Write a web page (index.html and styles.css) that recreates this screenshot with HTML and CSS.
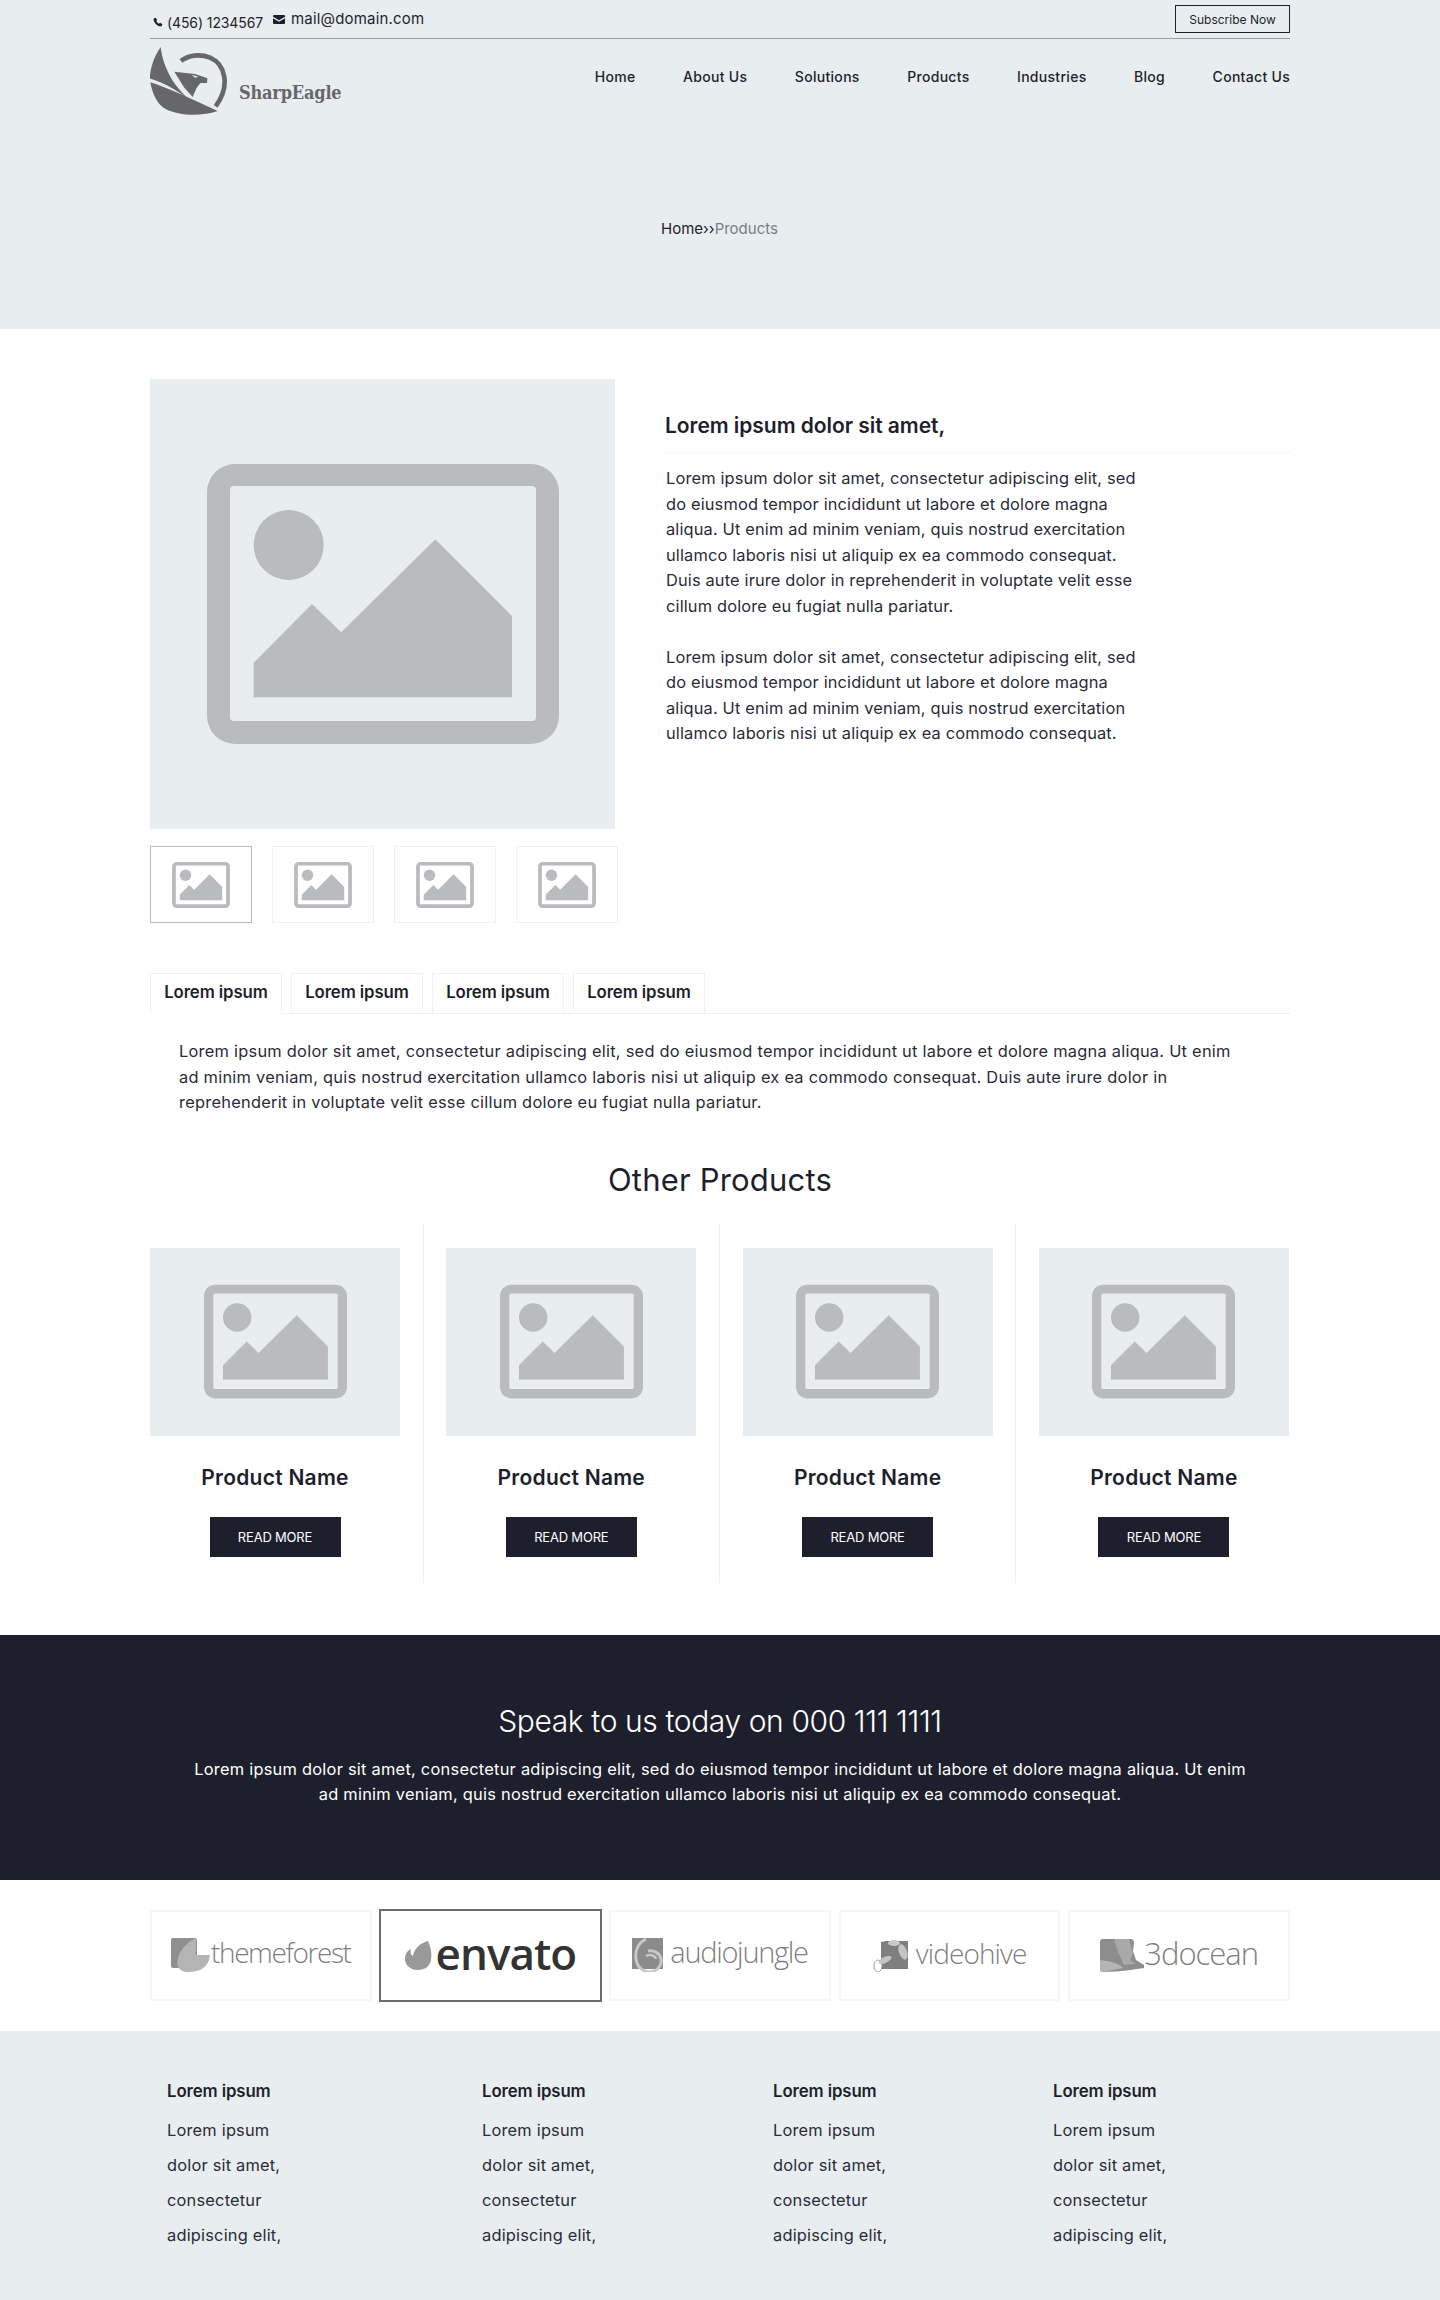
FILE: index.html
```html
<!DOCTYPE html>
<html lang="en">
<head>
<meta charset="utf-8">
<title>Products - SharpEagle</title>
<link rel="stylesheet" href="styles.css">
</head>
<body>
<svg class="defs" width="0" height="0" aria-hidden="true">
  <symbol id="ph" viewBox="0 0 352 280">
    <path fill-rule="evenodd" d="M28 0H324A28 28 0 0 1 352 28V252A28 28 0 0 1 324 280H28A28 28 0 0 1 0 252V28A28 28 0 0 1 28 0ZM27 22A4 4 0 0 0 23 26V253A4 4 0 0 0 27 257H325A4 4 0 0 0 329 253V26A4 4 0 0 0 325 22Z"/>
    <circle cx="81.7" cy="81" r="35"/>
    <path d="M46.7 198.7 105 140 134.3 168.3 228.3 75.3 305 152V233.3H46.7Z"/>
  </symbol>
</svg>

<header class="hero">
  <div class="wrap">
    <div class="topbar">
      <div class="contact">
        <span class="phone">
          <svg class="ic-phone" viewBox="0 0 24 24"><path d="M6.500 1.500 10 7 7.800 9.600c1 2.600 3.600 5.400 6.600 6.600L17 14l5.500 3.500-1.800 4.200c-.4.800-1.300 1.100-2.200 1C9.500 21.500 2.500 14.500 1.300 6c-.1-.9.200-1.800 1-2.200Z"/></svg>
          (456) 1234567
        </span>
        <span class="mail">
          <svg class="ic-mail" viewBox="0 0 24 18"><path d="M2 0H22A2 2 0 0 1 24 2V3.500L12 10.500 0 3.500V2A2 2 0 0 1 2 0ZM0 6.500 12 13.500 24 6.500V16A2 2 0 0 1 22 18H2A2 2 0 0 1 0 16Z"/></svg>
          mail@domain.com
        </span>
      </div>
      <a class="subscribe">Subscribe Now</a>
    </div>
    <div class="navrow">
      <div class="logo">
        <svg class="eagle" viewBox="15 114 237 204">
          <path d="M47 114C22 150 16 185 14 208 60 222 108 250 152 286 100 250 56 190 47 114Z"/>
          <path d="M16 220C62 234 135 268 218 306 170 322 105 322 62 300 36 286 22 254 16 220Z"/>
          <path d="M88 188 150 195 187 208 186 222 166 222 155 236 143 264 118 236Z"/>
          <path class="eagle-eye" d="M140 197 160 203 150 206Z"/>
          <path class="eagle-ring" d="M108 156C130 138 165 134 195 146 240 165 258 230 212 292"/>
        </svg>
        <span class="brand">SharpEagle</span>
      </div>
      <nav class="nav">
        <a>Home</a><a>About Us</a><a>Solutions</a><a>Products</a><a>Industries</a><a>Blog</a><a>Contact Us</a>
      </nav>
    </div>
    <div class="crumb"><span>Home</span><span>››</span><span class="crumb-cur">Products</span></div>
  </div>
</header>

<main class="wrap">
  <section class="detail">
    <div class="gallery">
      <div class="shot"><svg class="ph-lg"><use href="#ph"/></svg></div>
      <div class="thumbs">
        <div class="thumb thumb-on"><svg class="ph-sm"><use href="#ph"/></svg></div>
        <div class="thumb"><svg class="ph-sm"><use href="#ph"/></svg></div>
        <div class="thumb"><svg class="ph-sm"><use href="#ph"/></svg></div>
        <div class="thumb"><svg class="ph-sm"><use href="#ph"/></svg></div>
      </div>
    </div>
    <div class="info">
      <h2 class="info-title">Lorem ipsum dolor sit amet,</h2>
      <p class="copy">Lorem ipsum dolor sit amet, consectetur adipiscing elit, sed<br>do eiusmod tempor incididunt ut labore et dolore magna<br>aliqua. Ut enim ad minim veniam, quis nostrud exercitation<br>ullamco laboris nisi ut aliquip ex ea commodo consequat.<br>Duis aute irure dolor in reprehenderit in voluptate velit esse<br>cillum dolore eu fugiat nulla pariatur.</p>
      <p class="copy">Lorem ipsum dolor sit amet, consectetur adipiscing elit, sed<br>do eiusmod tempor incididunt ut labore et dolore magna<br>aliqua. Ut enim ad minim veniam, quis nostrud exercitation<br>ullamco laboris nisi ut aliquip ex ea commodo consequat.</p>
    </div>
  </section>

  <section class="tabs-block">
    <div class="tabs">
      <a class="tab tab-on">Lorem ipsum</a><a class="tab">Lorem ipsum</a><a class="tab">Lorem ipsum</a><a class="tab">Lorem ipsum</a>
    </div>
    <p class="tab-copy">Lorem ipsum dolor sit amet, consectetur adipiscing elit, sed do eiusmod tempor incididunt ut labore et dolore magna aliqua. Ut enim<br>ad minim veniam, quis nostrud exercitation ullamco laboris nisi ut aliquip ex ea commodo consequat. Duis aute irure dolor in<br>reprehenderit in voluptate velit esse cillum dolore eu fugiat nulla pariatur.</p>
  </section>

  <h2 class="section-title">Other Products</h2>
  <section class="products">
    <article class="product">
      <div class="product-img"><svg class="ph-md"><use href="#ph"/></svg></div>
      <h3 class="product-name">Product Name</h3>
      <a class="btn">READ MORE</a>
    </article>
    <article class="product">
      <div class="product-img"><svg class="ph-md"><use href="#ph"/></svg></div>
      <h3 class="product-name">Product Name</h3>
      <a class="btn">READ MORE</a>
    </article>
    <article class="product">
      <div class="product-img"><svg class="ph-md"><use href="#ph"/></svg></div>
      <h3 class="product-name">Product Name</h3>
      <a class="btn">READ MORE</a>
    </article>
    <article class="product">
      <div class="product-img"><svg class="ph-md"><use href="#ph"/></svg></div>
      <h3 class="product-name">Product Name</h3>
      <a class="btn">READ MORE</a>
    </article>
  </section>
</main>

<section class="cta">
  <h2 class="cta-title">Speak to us today on 000 111 1111</h2>
  <p class="cta-copy">Lorem ipsum dolor sit amet, consectetur adipiscing elit, sed do eiusmod tempor incididunt ut labore et dolore magna aliqua. Ut enim<br>ad minim veniam, quis nostrud exercitation ullamco laboris nisi ut aliquip ex ea commodo consequat.</p>
</section>

<section class="wrap brands">
  <div class="tile">
    <svg class="bi bi-tf" viewBox="0 0 40 34">
      <rect x="0" y="0" width="26" height="30" rx="2" fill="#8f8f8f"/>
      <path d="M25 0C16 4 9 12 7 20 5 28 8 33 15 34 24 34 34 33 38 22L39 17 26 17C24 16 24 15 25 12Z" fill="#b4b4b4"/>
    </svg>
    <span class="bt bt-tf">themeforest</span>
  </div>
  <div class="tile tile-on">
    <svg class="bi bi-en" viewBox="0 0 27 29"><path d="M23 0C26 7 27 12 26 19 25 25 20 29 13 29 5 29 0 24 0 18 0 13 3 9 6 8 5 12 6 14 8 15 9 8 15 2 23 0Z" fill="#999"/></svg>
    <span class="bt bt-en">envato</span>
  </div>
  <div class="tile">
    <svg class="bi bi-aj" viewBox="0 0 31 34">
      <rect x="0" y="0" width="31" height="31" fill="#8b8b8b"/>
      <path d="M14 1C6 5 3 13 4 21 5 29 11 34 18 34 26 33 30 27 29 21 28 15 22 12 16 13" fill="none" stroke="#c8c8c8" stroke-width="3"/>
      <path d="M24 21C23 17 18 16 14 18" fill="none" stroke="#c8c8c8" stroke-width="2.500"/>
    </svg>
    <span class="bt bt-aj">audiojungle</span>
  </div>
  <div class="tile">
    <svg class="bi bi-vh" viewBox="0 0 36 34">
      <path d="M8 4 13 3H35V31H8Z" fill="#7f7f7f"/>
      <ellipse cx="30" cy="14" rx="4" ry="8" fill="#c4c4c4" transform="rotate(-20 30 14)"/>
      <ellipse cx="21" cy="5" rx="6" ry="3" fill="#c9c9c9"/>
      <ellipse cx="5" cy="28" rx="4" ry="6" fill="#fff" stroke="#9a9a9a"/>
      <ellipse cx="12" cy="22" rx="7" ry="3" fill="#c4c4c4" transform="rotate(-25 12 22)"/>
    </svg>
    <span class="bt bt-vh">videohive</span>
  </div>
  <div class="tile">
    <svg class="bi bi-3d" viewBox="0 0 44 33">
      <path d="M3 0H31C33 0 34 2 34 4L33 12 36 21 44 26V29C36 30 20 33 3 33A3 3 0 0 1 0 30V3A3 3 0 0 1 3 0Z" fill="#8d8d8d"/>
      <path d="M14 0H29L33 14 30 21 36 25 24 26C20 17 16 9 14 0Z" fill="#a9a9a9"/>
      <path d="M0 21C10 22 18 24 23 29L3 33 0 31Z" fill="#b5b5b5"/>
    </svg>
    <span class="bt bt-3d">3docean</span>
  </div>
</section>

<footer class="footer">
  <div class="wrap footer-grid">
    <div class="fcol"><h4 class="fhead">Lorem ipsum</h4><ul class="flist"><li>Lorem ipsum</li><li>dolor sit amet,</li><li>consectetur</li><li>adipiscing elit,</li></ul></div>
    <div class="fcol"><h4 class="fhead">Lorem ipsum</h4><ul class="flist"><li>Lorem ipsum</li><li>dolor sit amet,</li><li>consectetur</li><li>adipiscing elit,</li></ul></div>
    <div class="fcol"><h4 class="fhead">Lorem ipsum</h4><ul class="flist"><li>Lorem ipsum</li><li>dolor sit amet,</li><li>consectetur</li><li>adipiscing elit,</li></ul></div>
    <div class="fcol"><h4 class="fhead">Lorem ipsum</h4><ul class="flist"><li>Lorem ipsum</li><li>dolor sit amet,</li><li>consectetur</li><li>adipiscing elit,</li></ul></div>
  </div>
</footer>
</body>
</html>
```
FILE: styles.css
```css
* { box-sizing: border-box; }
html, body { margin: 0; padding: 0; }
body {
  font-family: "Inter", "Liberation Sans", sans-serif;
  font-size: 16px;
  color: #1e1f2c;
  background: #fff;
  width: 1440px;
}
h2, h3, h4, p, ul { margin: 0; padding: 0; }
ul { list-style: none; }
.defs { display: block; height: 0; }
.wrap { width: 1140px; margin: 0 auto; }

.hero { background: #e8edf0; height: 329px; }
.topbar {
  height: 39px;
  border-bottom: 1px solid #999b9e;
  display: flex;
  justify-content: space-between;
  align-items: flex-start;
}
.contact { display: flex; padding-left: 3px; font-size: 14px; }
.phone { display: flex; align-items: center; height: 20px; margin-top: 12px; gap: 4px; width: 120px; letter-spacing: -.1px; }
.mail { display: flex; align-items: center; height: 20px; margin-top: 8px; gap: 6px; font-size: 15px; letter-spacing: .18px; }
.ic-phone { width: 10px; height: 10px; fill: #1e1f2c; flex: none; }
.ic-mail { width: 12px; height: 9px; fill: #1e1f2c; flex: none; margin-top: 3px; }
.subscribe {
  margin-top: 5px;
  width: 115px;
  height: 28px;
  border: 1px solid #1e1f2c;
  font-size: 12px;
  display: flex;
  align-items: center;
  justify-content: center;
}
.navrow { display: flex; justify-content: space-between; align-items: flex-start; padding-top: 8px; }
.logo { display: flex; align-items: flex-start; gap: 10px; }
.eagle { width: 79px; height: 68px; fill: #67676b; display: block; }
.eagle-eye { fill: #e8edf0; }
.eagle-ring { fill: none; stroke: #67676b; stroke-width: 14; }
.brand {
  font-family: "DejaVu Serif Condensed", "DejaVu Serif", "Liberation Serif", serif;
  font-weight: 700;
  font-size: 18px;
  color: #67676b;
  margin-top: 34px;
  line-height: 24px;
  letter-spacing: -.2px;
}
.nav { display: flex; gap: 47.500px; font-size: 14px; font-weight: 500; line-height: 20px; padding-top: 20px; letter-spacing: .3px; }
.crumb { display: flex; justify-content: center; font-size: 15px; line-height: 20px; margin-top: 104px; padding-right: 1px; }
.crumb-cur { color: #7b7d84; }

.detail { display: flex; gap: 47px; padding-top: 50px; }
.gallery { width: 468px; }
.shot { width: 465px; height: 450px; background: #e8edf0; display: flex; align-items: center; justify-content: center; }
.ph-lg { width: 352px; height: 280px; fill: #b9bbbe; }
.thumbs { display: flex; gap: 20.300px; margin-top: 17px; }
.thumb { width: 102px; height: 77px; border: 1px solid #f0f0f0; display: flex; align-items: center; justify-content: center; }
.thumb-on { border-color: #b9bbbe; }
.ph-sm { width: 58px; height: 46px; fill: #b9bbbe; }
.info { flex: 1; padding-top: 32px; }
.info-title { font-size: 21px; font-weight: 600; line-height: 30px; padding-bottom: 11px; border-bottom: 1px solid #f2f3f4; margin-bottom: 13px; letter-spacing: -.05px; }
.copy { font-size: 16.400px; line-height: 25.500px; padding-left: 1px; margin-bottom: 25.500px; color: #2a2b38; letter-spacing: .15px; }

.tabs-block { padding-top: 50px; }
.tabs { display: flex; gap: 9px; border-bottom: 1px solid #eff0f1; height: 41px; }
.tab { width: 132px; height: 41px; border: 1px solid #f0f0f0; font-size: 16.800px; font-weight: 600; display: flex; align-items: center; justify-content: center; letter-spacing: -.1px; padding-bottom: 3px; }
.tab-on { border-bottom-color: #fff; }
.tab-copy { padding: 25px 0 0 29px; font-size: 16.400px; line-height: 25.500px; color: #2a2b38; letter-spacing: .25px; }

.section-title { font-size: 31px; font-weight: 400; line-height: 45px; text-align: center; margin-top: 41px; letter-spacing: .2px; }
.products { display: grid; grid-template-columns: repeat(4, 250px); column-gap: 46.300px; margin-top: 22px; padding-bottom: 52px; }
.product { position: relative; display: flex; flex-direction: column; align-items: center; padding: 24px 0 26px; }
.product:not(:last-child)::after { content: ""; position: absolute; top: 0; bottom: 0; right: -23.500px; width: 1px; background: #eceeef; }
.product-img { width: 250px; height: 188px; background: #e8edf0; display: flex; align-items: center; justify-content: center; }
.ph-md { width: 143px; height: 115px; fill: #b9bbbe; }
.product-name { font-size: 21px; font-weight: 600; line-height: 30px; margin-top: 27px; letter-spacing: .25px; }
.btn { width: 131px; height: 40px; margin-top: 24px; background: #1e1f2c; color: #fff; font-size: 13px; letter-spacing: -.2px; display: flex; align-items: center; justify-content: center; }

.cta { background: #1e1f2c; color: #fff; height: 245px; padding-top: 64px; text-align: center; }
.cta-title { font-size: 30px; font-weight: 300; line-height: 45px; letter-spacing: -.4px; }
.cta-copy { font-size: 16.400px; line-height: 25px; margin-top: 13px; letter-spacing: .25px; }

.brands { display: grid; grid-template-columns: repeat(5, 1fr); gap: 8px; padding: 30px 0; height: 151px; }
.tile { border: 2px solid #f5f6f7; display: flex; align-items: center; justify-content: center; color: #808080; }
.tile-on { border-color: #6d6d6d; color: #333; margin: -1px -1px; }
.bi { display: block; flex: none; }
.bi-tf { width: 40px; height: 34px; }
.bi-en { width: 27px; height: 29px; margin-right: 4px; }
.bi-aj { width: 31px; height: 34px; margin-right: 7px; }
.bi-vh { width: 36px; height: 34px; margin-right: 7px; }
.bi-3d { width: 44px; height: 33px; }
.bt { font-family: "Open Sans", "Liberation Sans", sans-serif; font-weight: 300; white-space: nowrap; }
.bt-tf { font-size: 28px; letter-spacing: -1.400px; line-height: 34px; margin-top: -6px; }
.bt-en { font-size: 44px; font-weight: 600; letter-spacing: -1px; line-height: 46px; margin-top: -5px; }
.bt-aj { font-size: 29px; letter-spacing: -1.300px; line-height: 34px; margin-top: -6px; }
.bt-vh { font-size: 28px; letter-spacing: -.9px; line-height: 34px; margin-top: -4px; }
.bt-3d { font-size: 31px; letter-spacing: -1px; line-height: 34px; margin-top: -4px; }

.footer { background: #e8edf0; height: 270px; padding-top: 48px; }
.footer-grid { display: grid; grid-template-columns: 315px 291px 280px 1fr; padding-left: 17px; }
.fhead { font-size: 16.800px; font-weight: 600; line-height: 24px; margin-bottom: 10px; letter-spacing: -.1px; }
.flist li { font-size: 16.400px; line-height: 35px; color: #2a2b38; letter-spacing: .2px; }
```
